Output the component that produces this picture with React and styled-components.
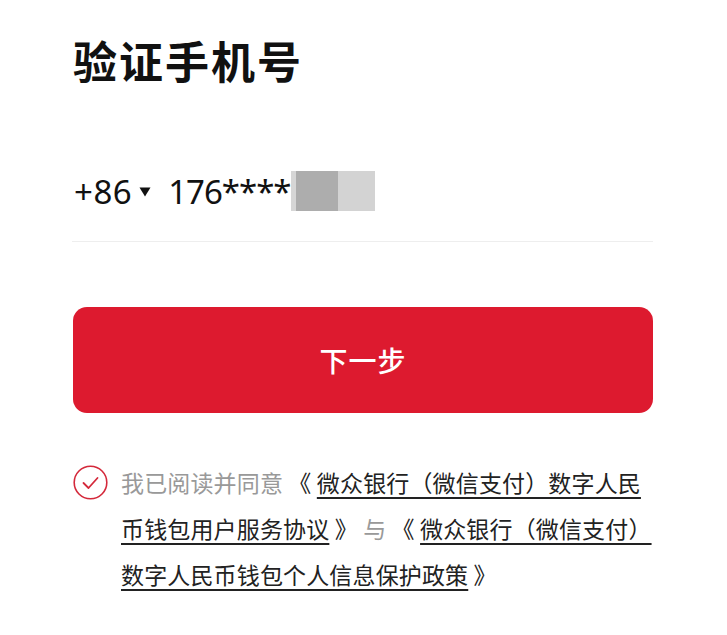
import React from "react";
import styled, { createGlobalStyle } from "styled-components";

const GlobalStyle = createGlobalStyle`
  body {
    margin: 0;
    background: #fff;
    font-family: "Noto Sans CJK SC", "Noto Sans", sans-serif;
  }
`;

const Page = styled.div`
  width: 727px;
  height: 635px;
  box-sizing: border-box;
  padding: 34px 74px 0 73px;
  background: #fff;
`;

const Title = styled.h1`
  margin: 0;
  font-size: 44px;
  line-height: 53px;
  font-weight: 700;
  color: #111;
  letter-spacing: 2px;
`;

const PhoneRow = styled.div`
  display: flex;
  align-items: center;
  height: 40px;
  margin-top: 84px;
  padding-left: 1px;
  font-family: "Noto Sans", "Noto Sans CJK SC", sans-serif;
  font-size: 33px;
  color: #111;
`;

const Code = styled.span`
  display: flex;
  align-items: center;
  gap: 7px;
  letter-spacing: 0.5px;
`;

const Caret = styled.svg`
  flex: none;
  margin-top: 2px;
`;

const Number = styled.span`
  margin-left: 17px;
  letter-spacing: -1px;
`;

const Mask = styled.span`
  display: inline-block;
  width: ${(p) => p.w}px;
  height: 40px;
  background: ${(p) => p.c};
`;

const Divider = styled.div`
  height: 1px;
  margin: 30px 0 0 -1px;
  background: #eeeeee;
`;

const NextButton = styled.button`
  display: block;
  width: 580px;
  height: 106px;
  margin-top: 65px;
  border: none;
  border-radius: 14px;
  background: #dd1a2f;
  color: #fff;
  font-family: "Noto Sans CJK SC", sans-serif;
  font-size: 28px;
  font-weight: 500;
  letter-spacing: 1px;
`;

const Agreement = styled.div`
  display: flex;
  align-items: flex-start;
  gap: 13px;
  margin-top: 46px;
`;

const Check = styled.svg`
  flex: none;
  margin-top: 6px;
`;

const Text = styled.p`
  margin: 0;
  width: 536px;
  font-size: 23px;
  line-height: 46px;
  color: #999;
  letter-spacing: 0.15px;
`;

const Dark = styled.span`
  color: #222;
`;

const Link = styled.span`
  color: #222;
  text-decoration: underline;
  text-decoration-thickness: 1.5px;
  text-underline-offset: 5px;
`;

export default function App() {
  return (
    <Page>
      <GlobalStyle />
      <Title>验证手机号</Title>
      <PhoneRow>
        <Code>
          +86
          <Caret width="12" height="10" viewBox="0 0 12 10">
            <path d="M0.5 0.5h11L6 9.5z" fill="#111" />
          </Caret>
        </Code>
        <Number>176****</Number>
        <Mask w={5} c="#d6d6d6" />
        <Mask w={42} c="#adadad" />
        <Mask w={37} c="#d3d3d3" />
      </PhoneRow>
      <Divider />
      <NextButton>下一步</NextButton>
      <Agreement>
        <Check width="35" height="35" viewBox="0 0 35 35">
          <circle cx="17.5" cy="17.5" r="16.3" fill="none" stroke="#d4293b" strokeWidth="1.6" />
          <path d="M10.5 18l5 5 9-10" fill="none" stroke="#d4293b" strokeWidth="1.8" strokeLinecap="round" strokeLinejoin="round" />
        </Check>
        <Text>
          我已阅读并同意 <Dark>《</Dark> <Link>微众银行（微信支付）数字人民币钱包用户服务协议</Link>{" "}
          <Dark>》</Dark> 与 <Dark>《</Dark> <Link>微众银行（微信支付） 数字人民币钱包个人信息保护政策</Link>{" "}
          <Dark>》</Dark>
        </Text>
      </Agreement>
    </Page>
  );
}
